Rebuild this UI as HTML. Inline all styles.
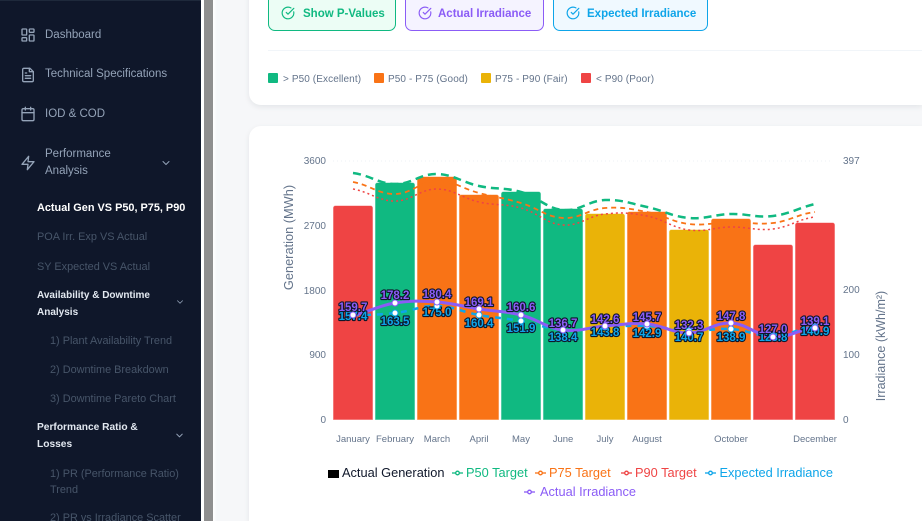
<!DOCTYPE html>
<html style="width:922px;height:521px;overflow:hidden"><head><meta charset="utf-8"><style>
*{box-sizing:border-box}html,body{margin:0;padding:0}
body{width:922px;height:521px;overflow:hidden;position:relative;background:#f6f7f9;font-family:"Liberation Sans",sans-serif}
#wrap{position:absolute;left:0;top:0;width:922px;height:521px;overflow:hidden}
.a{position:absolute;white-space:nowrap}
#side{position:absolute;left:0;top:0;width:201px;height:521px;background:#0f172a}
.m{font-size:11.5px;color:#94a3b8;line-height:17px}
.s{font-size:10.9px;color:#475569;line-height:16px}
.b{font-size:10px;font-weight:bold;color:#e2e8f0;line-height:16.500px}
.ic{position:absolute;fill:none;stroke:#94a3b8;stroke-width:2;stroke-linecap:round;stroke-linejoin:round}
.card{position:absolute;left:249px;width:673px;background:#fff;box-shadow:0 2px 6px rgba(15,23,42,.08)}
.btn{position:absolute;top:-10px;height:41px;border-radius:7px;border:1px solid;font-size:11.500px;font-weight:bold}
.btn span{position:absolute;top:16px;line-height:14px;white-space:nowrap}
.btn svg{position:absolute;left:12px;top:15px;fill:none;stroke:currentColor;stroke-width:2;stroke-linecap:round;stroke-linejoin:round}
.sq{position:absolute;top:73px;width:10px;height:10px;border-radius:1px}
.lg{position:absolute;top:72.500px;font-size:10px;line-height:13px;color:#64748b;white-space:nowrap;letter-spacing:.1px}
</style></head><body><div id="wrap">
<div class="a" style="left:201px;top:0;width:3px;height:521px;background:#fff"></div>
<div class="a" style="left:204px;top:0;width:9px;height:521px;background:#8f8f8f"></div>
<div class="a" style="left:213px;top:0;width:4px;height:521px;background:linear-gradient(90deg,#fff,#f6f7f9)"></div>
<div id="side">
<div class="a" style="left:0;top:0;width:201px;height:1px;background:#1e293b"></div>
<svg class="ic" style="left:20px;top:27px" width="16" height="16" viewBox="0 0 24 24"><rect x="3" y="3" width="7" height="9" rx="1"/><rect x="14" y="3" width="7" height="5" rx="1"/><rect x="14" y="12" width="7" height="9" rx="1"/><rect x="3" y="16" width="7" height="5" rx="1"/></svg>
<div class="a m" style="left:45px;top:27px">Dashboard</div>
<svg class="ic" style="left:20px;top:67px" width="16" height="16" viewBox="0 0 24 24"><path d="M15 2H6a2 2 0 0 0-2 2v16a2 2 0 0 0 2 2h12a2 2 0 0 0 2-2V7z"/><path d="M14 2v5h6M16 13H8M16 17H8M10 9H8"/></svg>
<div class="a m" style="left:45px;top:66px">Technical Specifications</div>
<svg class="ic" style="left:20px;top:106px" width="16" height="16" viewBox="0 0 24 24"><path d="M8 2v4M16 2v4"/><rect x="3" y="4" width="18" height="18" rx="2"/><path d="M3 10h18"/></svg>
<div class="a m" style="left:45px;top:106px">IOD &amp; COD</div>
<svg class="ic" style="left:20px;top:155px" width="16" height="16" viewBox="0 0 24 24"><path d="M13 2 3 14h9l-1 8 10-12h-9z"/></svg>
<div class="a m" style="left:45px;top:146px">Performance<br>Analysis</div>
<svg class="ic" style="left:160px;top:157px;stroke-width:2" width="12" height="12" viewBox="0 0 24 24"><path d="m6 9 6 6 6-6"/></svg>
<div class="a s" style="left:37px;top:200px;color:#fff;font-weight:bold">Actual Gen VS P50, P75, P90</div>
<div class="a s" style="left:37px;top:229px">POA Irr. Exp VS Actual</div>
<div class="a s" style="left:37px;top:259px">SY Expected VS Actual</div>
<div class="a b" style="left:37px;top:288px">Availability &amp; Downtime<br>Analysis</div>
<svg class="ic" style="left:175px;top:297px" width="10" height="10" viewBox="0 0 24 24"><path d="m6 9 6 6 6-6"/></svg>
<div class="a s" style="left:50px;top:333px">1) Plant Availability Trend</div>
<div class="a s" style="left:50px;top:362px">2) Downtime Breakdown</div>
<div class="a s" style="left:50px;top:391px">3) Downtime Pareto Chart</div>
<div class="a b" style="left:37px;top:420px;font-size:10.200px">Performance Ratio &amp;<br>Losses</div>
<svg class="ic" style="left:174px;top:430px" width="11" height="11" viewBox="0 0 24 24"><path d="m6 9 6 6 6-6"/></svg>
<div class="a s" style="left:50px;top:466px">1) PR (Performance Ratio)<br>Trend</div>
<div class="a s" style="left:50px;top:510px">2) PR vs Irradiance Scatter</div>
</div>

<div class="card" style="top:-30px;height:135px;border-radius:12px 0 0 12px"></div>
<div class="btn" style="left:268px;width:128px;color:#10b981;background:#ecfdf5"><svg width="14" height="14" viewBox="0 0 24 24"><path d="M21.800 10A10 10 0 1 1 17 3.300"/><path d="m9 11 3 3L22 4"/></svg><span style="left:34px">Show P-Values</span></div>
<div class="btn" style="left:405px;width:139px;color:#8b5cf6;background:#f5f3ff"><svg width="14" height="14" viewBox="0 0 24 24"><path d="M21.800 10A10 10 0 1 1 17 3.300"/><path d="m9 11 3 3L22 4"/></svg><span style="left:32px">Actual Irradiance</span></div>
<div class="btn" style="left:553px;width:155px;color:#0ea5e9;background:#f0f9ff"><svg width="14" height="14" viewBox="0 0 24 24"><path d="M21.800 10A10 10 0 1 1 17 3.300"/><path d="m9 11 3 3L22 4"/></svg><span style="left:33px">Expected Irradiance</span></div>
<div class="a" style="left:268px;top:50px;width:654px;height:1px;background:#f1f5f9"></div>
<div class="sq" style="left:268px;background:#10b981"></div><div class="lg" style="left:283px">&gt; P50 (Excellent)</div>
<div class="sq" style="left:374px;background:#f97316"></div><div class="lg" style="left:388px">P50 - P75 (Good)</div>
<div class="sq" style="left:481px;background:#eab308"></div><div class="lg" style="left:495px">P75 - P90 (Fair)</div>
<div class="sq" style="left:581px;background:#ef4444"></div><div class="lg" style="left:596px">&lt; P90 (Poor)</div>

<div class="card" style="top:126px;height:395px;border-radius:12px 0 0 0"></div>
<svg class="a" style="left:0;top:0" width="922" height="521" viewBox="0 0 922 521" font-family="'Liberation Sans',sans-serif">
<line x1="333" y1="161" x2="833" y2="161" stroke="#eef1f5" stroke-width="1" stroke-dasharray="1 3"/>
<g font-size="10" fill="#64748b" text-anchor="end"><text x="326" y="164">3600</text><text x="326" y="229">2700</text><text x="326" y="294">1800</text><text x="326" y="358">900</text><text x="326" y="423">0</text></g>
<g font-size="10" fill="#64748b"><text x="843" y="164">397</text><text x="843" y="293">200</text><text x="843" y="358">100</text><text x="843" y="423">0</text></g>
<text transform="translate(293 237.500) rotate(-90)" font-size="12.800" fill="#64748b" text-anchor="middle">Generation (MWh)</text>
<text transform="translate(885 346) rotate(-90)" font-size="12.500" fill="#64748b" text-anchor="middle">Irradiance (kWh/m²)</text>
<g stroke-opacity=".45" stroke-width="1">
<path d="M333.500 419.500V208a2 2 0 0 1 2-2h35a2 2 0 0 1 2 2v211.500z" fill="#ef4444" stroke="#ef4444"/>
<path d="M375.500 419.500V185a2 2 0 0 1 2-2h35a2 2 0 0 1 2 2v234.500z" fill="#10b981" stroke="#10b981"/>
<path d="M417.500 419.500V179a2 2 0 0 1 2-2h35a2 2 0 0 1 2 2v240.500z" fill="#f97316" stroke="#f97316"/>
<path d="M459.500 419.500V197a2 2 0 0 1 2-2h35a2 2 0 0 1 2 2v222.500z" fill="#f97316" stroke="#f97316"/>
<path d="M501.500 419.500V194a2 2 0 0 1 2-2h35a2 2 0 0 1 2 2v225.500z" fill="#10b981" stroke="#10b981"/>
<path d="M543.500 419.500V211a2 2 0 0 1 2-2h35a2 2 0 0 1 2 2v208.500z" fill="#10b981" stroke="#10b981"/>
<path d="M585.500 419.500V216a2 2 0 0 1 2-2h35a2 2 0 0 1 2 2v203.500z" fill="#eab308" stroke="#eab308"/>
<path d="M627.500 419.500V214a2 2 0 0 1 2-2h35a2 2 0 0 1 2 2v205.500z" fill="#f97316" stroke="#f97316"/>
<path d="M669.500 419.500V232a2 2 0 0 1 2-2h35a2 2 0 0 1 2 2v187.500z" fill="#eab308" stroke="#eab308"/>
<path d="M711.500 419.500V221a2 2 0 0 1 2-2h35a2 2 0 0 1 2 2v198.500z" fill="#f97316" stroke="#f97316"/>
<path d="M753.500 419.500V247a2 2 0 0 1 2-2h35a2 2 0 0 1 2 2v172.500z" fill="#ef4444" stroke="#ef4444"/>
<path d="M795.500 419.500V225a2 2 0 0 1 2-2h35a2 2 0 0 1 2 2v194.500z" fill="#ef4444" stroke="#ef4444"/>
</g>
<g fill="none">
<path d="M353 173C369.800 175 378.200 183.800 395 184S420.200 173.600 437 174S462.200 182.400 479 186S504.200 187.200 521 192S546.200 208.400 563 210S588.200 200.600 605 200S630.200 203.400 647 207S672.200 216.600 689 218S714.200 214.400 731 214S756.200 218 773 216S798.200 208 815 204" stroke="#10b981" stroke-width="2.500" stroke-dasharray="8 5"/>
<path d="M353 182C369.800 185 378.200 194.200 395 194S420.200 181.200 437 181S462.200 188.600 479 193S504.200 198 521 203S546.200 217 563 218S588.200 209.200 605 208S630.200 208.800 647 212S672.200 222 689 224S714.200 222.200 731 222S756.200 225 773 223S798.200 214 815 212" stroke="#f97316" stroke-width="1.800" stroke-dasharray="5 4"/>
<path d="M353 189C369.800 192 378.200 201 395 201S420.200 188.800 437 189S462.200 198.200 479 202S504.200 203.400 521 208S546.200 223.800 563 225S588.200 215.800 605 214S630.200 212.800 647 216S672.200 227.800 689 230S714.200 227.200 731 227S756.200 231 773 229S798.200 219 815 217" stroke="#ef4444" stroke-width="1.500" stroke-dasharray="2 3"/>
<path d="M353 315C369.800 315 378.200 314.800 395 313S420.200 305.600 437 306S462.200 312 479 315S504.200 318 521 321S546.200 328.800 563 330S588.200 327.800 605 327S630.200 325.200 647 326S672.200 330.400 689 331S714.200 328 731 329S756.200 336.400 773 336S798.200 328 815 327" stroke="#0ea5e9" stroke-width="2.500" stroke-dasharray="6 6"/>
<path d="M353 315C369.800 312 378.200 305.600 395 303S420.200 300.800 437 302S462.200 306.400 479 309S504.200 310.800 521 315S546.200 327.800 563 330S588.200 327.200 605 326S630.200 322.600 647 324S672.200 333.200 689 333S714.200 322.200 731 323S756.200 336 773 337S798.200 329 815 328" stroke="#8b5cf6" stroke-width="3"/>
</g>
<g font-size="11.500" font-weight="bold" text-anchor="middle" fill="#0ea5e9" stroke="#0f172a" stroke-width="2.200" paint-order="stroke" stroke-linejoin="round">
<text x="353" y="320">157.4</text><text x="395" y="325">163.5</text><text x="437" y="316">175.0</text><text x="479" y="327">160.4</text><text x="521" y="332">151.9</text><text x="563" y="341">138.4</text><text x="605" y="336">143.8</text><text x="647" y="337">142.9</text><text x="689" y="341">140.7</text><text x="731" y="341">138.9</text><text x="773" y="341">128.8</text><text x="815" y="335">140.9</text>
</g>
<g font-size="11.500" font-weight="bold" text-anchor="middle" fill="#8b5cf6" stroke="#0f172a" stroke-width="2.200" paint-order="stroke" stroke-linejoin="round">
<text x="353" y="311">159.7</text><text x="395" y="299">178.2</text><text x="437" y="298">180.4</text><text x="479" y="306">169.1</text><text x="521" y="311">160.6</text><text x="563" y="327">136.7</text><text x="605" y="323">142.6</text><text x="647" y="321">145.7</text><text x="689" y="329">132.3</text><text x="731" y="320">147.8</text><text x="773" y="333">127.0</text><text x="815" y="325">139.1</text>
</g>
<g fill="#fff" stroke="#0ea5e9" stroke-width="1">
<circle cx="353" cy="315" r="3"/><circle cx="395" cy="313" r="3"/><circle cx="437" cy="306" r="3"/><circle cx="479" cy="315" r="3"/><circle cx="521" cy="321" r="3"/><circle cx="563" cy="330" r="3"/><circle cx="605" cy="327" r="3"/><circle cx="647" cy="326" r="3"/><circle cx="689" cy="331" r="3"/><circle cx="731" cy="329" r="3"/><circle cx="773" cy="336" r="3"/><circle cx="815" cy="327" r="3"/>
</g>
<g fill="#fff" stroke="#8b5cf6" stroke-width="1">
<circle cx="353" cy="315" r="3"/><circle cx="395" cy="303" r="3"/><circle cx="437" cy="302" r="3"/><circle cx="479" cy="309" r="3"/><circle cx="521" cy="315" r="3"/><circle cx="563" cy="330" r="3"/><circle cx="605" cy="326" r="3"/><circle cx="647" cy="324" r="3"/><circle cx="689" cy="333" r="3"/><circle cx="731" cy="323" r="3"/><circle cx="773" cy="337" r="3"/><circle cx="815" cy="328" r="3"/>
</g>
<g font-size="9.500" fill="#64748b" text-anchor="middle">
<text x="353" y="442">January</text><text x="395" y="442">February</text><text x="437" y="442">March</text><text x="479" y="442">April</text><text x="521" y="442">May</text><text x="563" y="442">June</text><text x="605" y="442">July</text><text x="647" y="442">August</text><text x="731" y="442">October</text><text x="815" y="442">December</text>
</g>
<rect x="328" y="470" width="11" height="8" fill="#000"/>
<g font-size="12.800">
<text x="342" y="477" fill="#0f172a">Actual Generation</text>
<text x="466" y="477" fill="#10b981">P50 Target</text>
<text x="549" y="477" fill="#f97316">P75 Target</text>
<text x="635" y="477" fill="#ef4444">P90 Target</text>
<text x="719.500" y="477" fill="#0ea5e9" textLength="113.500">Expected Irradiance</text>
<text x="540" y="496" fill="#8b5cf6">Actual Irradiance</text>
</g>
<g fill="#fff" stroke-width="1.300">
<path d="M452 473h11" stroke="#10b981"/><circle cx="457.500" cy="473" r="1.800" stroke="#10b981"/>
<path d="M535 473h11" stroke="#f97316"/><circle cx="540.500" cy="473" r="1.800" stroke="#f97316"/>
<path d="M621 473h11" stroke="#ef4444"/><circle cx="626.500" cy="473" r="1.800" stroke="#ef4444"/>
<path d="M705 473h11" stroke="#0ea5e9"/><circle cx="710.500" cy="473" r="1.800" stroke="#0ea5e9"/>
<path d="M524 492h11" stroke="#8b5cf6"/><circle cx="529.500" cy="492" r="1.800" stroke="#8b5cf6"/>
</g>
</svg>
</div></body></html>
